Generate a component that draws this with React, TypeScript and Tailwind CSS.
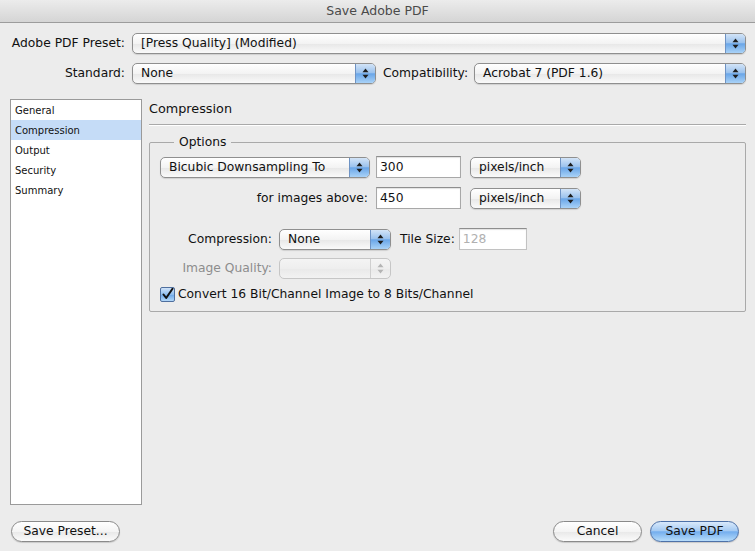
import React from 'react'

const font = "font-['DejaVu_Sans','Liberation_Sans',sans-serif]"

function Arrows({ disabled }: { disabled?: boolean }) {
  const c = disabled ? '#b4b4b4' : '#1d1d1d'
  return (
    <svg width="7" height="11" viewBox="0 0 7 11">
      <path d="M3.5 0.5 L6.5 4.2 L0.5 4.2 Z" fill={c} />
      <path d="M3.5 10.5 L6.5 6.8 L0.5 6.8 Z" fill={c} />
    </svg>
  )
}

function Popup({ text, className = '', disabled }: { text?: string; className?: string; disabled?: boolean }) {
  return (
    <div
      className={`flex h-[21px] items-stretch rounded-[5px] border ${
        disabled
          ? 'border-[#c6c6c6] bg-[linear-gradient(to_bottom,#f4f4f4_0%,#eeeeee_50%,#e9e9e9_51%,#f2f2f2_100%)]'
          : 'border-[#8f8f8f] bg-[linear-gradient(to_bottom,#ffffff_0%,#f3f3f3_50%,#e7e7e7_51%,#fafafa_100%)] shadow-[0_1px_1px_rgba(0,0,0,0.12)]'
      } ${className}`}
    >
      <div className="flex flex-1 items-center pl-[8px] text-[#111] leading-none">{text}</div>
      <div
        className={`flex w-[20px] items-center justify-center rounded-r-[4px] border-l ${
          disabled
            ? 'border-[#cfcfcf]'
            : 'border-[#6e93c4] bg-[linear-gradient(to_bottom,#d3e4f7_0%,#9cc3ee_45%,#6aa6e8_52%,#a9d2f7_100%)]'
        }`}
      >
        <Arrows disabled={disabled} />
      </div>
    </div>
  )
}

function Field({ value, className = '', disabled }: { value: string; className?: string; disabled?: boolean }) {
  return (
    <div
      className={`flex h-[22px] items-center border border-[#a8a8a8] border-t-[#8e8e8e] bg-white pl-[3px] shadow-[inset_0_1px_1px_rgba(0,0,0,0.12)] ${
        disabled ? 'text-[#b0b0b0]' : 'text-[#111]'
      } ${className}`}
    >
      {value}
    </div>
  )
}

function PillButton({ label, className = '', primary }: { label: string; className?: string; primary?: boolean }) {
  return (
    <button
      className={`flex h-[21px] items-center justify-center rounded-full border text-[#111] ${
        primary
          ? 'border-[#4d71a8] bg-[linear-gradient(to_bottom,#d9e9fb_0%,#a6cbf3_45%,#74aeee_52%,#b7dcfa_100%)]'
          : 'border-[#8a8a8a] bg-[linear-gradient(to_bottom,#ffffff_0%,#f4f4f4_50%,#e8e8e8_51%,#fbfbfb_100%)]'
      } shadow-[0_1px_1px_rgba(0,0,0,0.15)] ${className}`}
    >
      {label}
    </button>
  )
}

const sections = ['General', 'Compression', 'Output', 'Security', 'Summary']

export default function App() {
  return (
    <div className={`flex h-[551px] w-[755px] flex-col overflow-hidden bg-[#ececec] text-[12.3px] ${font}`}>
      <div className="flex h-[23px] shrink-0 items-center justify-center border-b border-[#9c9c9c] bg-linear-to-b from-[#ececec] to-[#d5d5d5] pt-[1px] text-[12.5px] text-[#4a4a4a]">
        Save Adobe PDF
      </div>

      <div className="flex flex-col gap-[9px] pt-[10px] pr-[9px]">
        <div className="flex items-center">
          <div className="w-[125px] text-right text-[#111]">Adobe PDF Preset:</div>
          <Popup text="[Press Quality] (Modified)" className="ml-[7px] flex-1" />
        </div>
        <div className="flex items-center">
          <div className="w-[125px] text-right text-[#111]">Standard:</div>
          <Popup text="None" className="ml-[7px] w-[244px]" />
          <div className="ml-[7px] text-[#111]">Compatibility:</div>
          <Popup text="Acrobat 7 (PDF 1.6)" className="ml-[6px] flex-1" />
        </div>
      </div>

      <div className="mt-[15px] flex h-[406px] pl-[10px] pr-[9px]">
        <div className="w-[132px] border border-[#9a9a9a] bg-white text-[10px] text-[#111]">
          {sections.map((s) => (
            <div
              key={s}
              className={`flex h-[20px] items-center pl-[4px] ${s === 'Compression' ? 'bg-[#c5dcf7]' : ''}`}
            >
              {s}
            </div>
          ))}
        </div>

        <div className="ml-[7px] flex flex-1 flex-col">
          <div className="pt-[1px] text-[12.8px] leading-[17px] text-[#111]">Compression</div>
          <div className="mt-[7px] h-[2px] border-t border-[#a9a9a9] border-b-white border-b"></div>

          <fieldset className="mt-[8px] rounded-[2px] border border-[#a9a9a9] pb-[8px] pl-[10px]">
            <legend className="ml-[14px] px-[5px] leading-[16px] text-[#111]">Options</legend>
            <div className="mt-[6px] flex flex-col text-[#111]">
              <div className="flex items-center">
                <Popup text="Bicubic Downsampling To" className="w-[210px]" />
                <Field value="300" className="ml-[6px] w-[85px]" />
                <Popup text="pixels/inch" className="ml-[9px] w-[111px]" />
              </div>
              <div className="mt-[9px] flex items-center">
                <div className="w-[208px] text-right">for images above:</div>
                <Field value="450" className="ml-[8px] w-[85px]" />
                <Popup text="pixels/inch" className="ml-[9px] w-[111px]" />
              </div>
              <div className="mt-[19px] flex items-center">
                <div className="w-[112px] text-right">Compression:</div>
                <Popup text="None" className="ml-[7px] w-[112px]" />
                <div className="ml-[9px]">Tile Size:</div>
                <Field value="128" disabled className="ml-[4px] w-[68px] h-[21px] border-[#c2c2c2]" />
              </div>
              <div className="mt-[8px] flex items-center">
                <div className="w-[112px] text-right text-[#8d8d8d]">Image Quality:</div>
                <Popup disabled className="ml-[7px] w-[112px]" />
              </div>
              <div className="mt-[6px] flex items-center">
                <div className="flex h-[15px] w-[15px] items-center justify-center rounded-[2px] border border-[#4f6f9e] bg-[linear-gradient(to_bottom,#cfe2f8_0%,#8fbdee_50%,#6ba6e8_51%,#b3d8f9_100%)]">
                  <svg width="13" height="13" viewBox="0 0 13 13">
                    <path d="M2.5 6.5 L5.2 10 L11.5 0.8" fill="none" stroke="#111" strokeWidth="2" strokeLinecap="round" strokeLinejoin="round" />
                  </svg>
                </div>
                <div className="ml-[3px]">Convert 16 Bit/Channel Image to 8 Bits/Channel</div>
              </div>
            </div>
          </fieldset>
        </div>
      </div>

      <div className="mt-[16px] flex items-center pl-[11px] pr-[16px] text-[12.3px]">
        <PillButton label="Save Preset..." className="w-[109px]" />
        <div className="flex-1" />
        <PillButton label="Cancel" className="w-[89px]" />
        <PillButton label="Save PDF" primary className="ml-[8px] w-[89px]" />
      </div>
    </div>
  )
}
